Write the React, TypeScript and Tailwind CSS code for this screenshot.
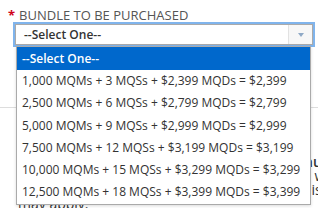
import React from "react";

const options = [
  "1,000 MQMs + 3 MQSs + $2,399 MQDs = $2,399",
  "2,500 MQMs + 6 MQSs + $2,799 MQDs = $2,799",
  "5,000 MQMs + 9 MQSs + $2,999 MQDs = $2,999",
  "7,500 MQMs + 12 MQSs + $3,199 MQDs = $3,199",
  "10,000 MQMs + 15 MQSs + $3,299 MQDs = $3,299",
  "12,500 MQMs + 18 MQSs + $3,399 MQDs = $3,399",
];

const App = () => {
  return (
    <div
      className="relative w-[318px] h-[208px] overflow-hidden bg-white text-[#333]"
      style={{ fontFamily: '"Open Sans", "Liberation Sans", sans-serif' }}
    >
      {/* label */}
      <div className="pl-[8px] pt-[6px] h-[24px] text-[13px] leading-[18px] text-[#555]">
        <span className="text-[#d0021b] font-bold mr-[4px]">*</span>
        BUNDLE TO BE PURCHASED
      </div>

      {/* select box */}
      <div className="ml-[15px] w-[298px] h-[21px] flex border border-[#aaa] bg-white shadow-[0_0_0_2px_#80b4ec]">
        <div className="flex-1 pl-[8px] text-[12px] leading-[19px] font-semibold text-[#333]">
          --Select One--
        </div>
        <div className="w-[24px] border-l border-[#e2e2e2] bg-[#f7f7f7] flex items-center justify-center">
          <svg width="6" height="4" viewBox="0 0 6 4">
            <path d="M0 0 L6 0 L3 4 Z" fill="#8fa9c6" />
          </svg>
        </div>
      </div>

      {/* page content behind dropdown */}
      <div className="mt-[62px] border-t border-[#ddd]" />
      <div className="pt-[47px] text-[14px] leading-[14px] text-[#333] whitespace-nowrap">
        <p className="text-right -mr-[40px] font-semibold">purchase order number</p>
        <p className="text-right -mr-[38px]">and a sales tax will be</p>
        <p className="text-right -mr-[36px]">charged where it is due;</p>
        <p className="pl-[18px]">may apply.</p>
      </div>

      {/* open dropdown */}
      <ul className="absolute left-[16px] top-[46px] w-[295px] border border-[#aaa] bg-white text-[12px] shadow-[0_1px_3px_rgba(0,0,0,0.15)]">
        <li className="h-[23px] leading-[23px] pl-[5px] bg-[#0068cc] text-white font-semibold">
          --Select One--
        </li>
        {options.map((o, i) => (
          <li key={i} className="h-[22.3px] leading-[22.3px] pl-[5px] text-[#333]">
            {o}
          </li>
        ))}
      </ul>
    </div>
  );
};

export default App;
